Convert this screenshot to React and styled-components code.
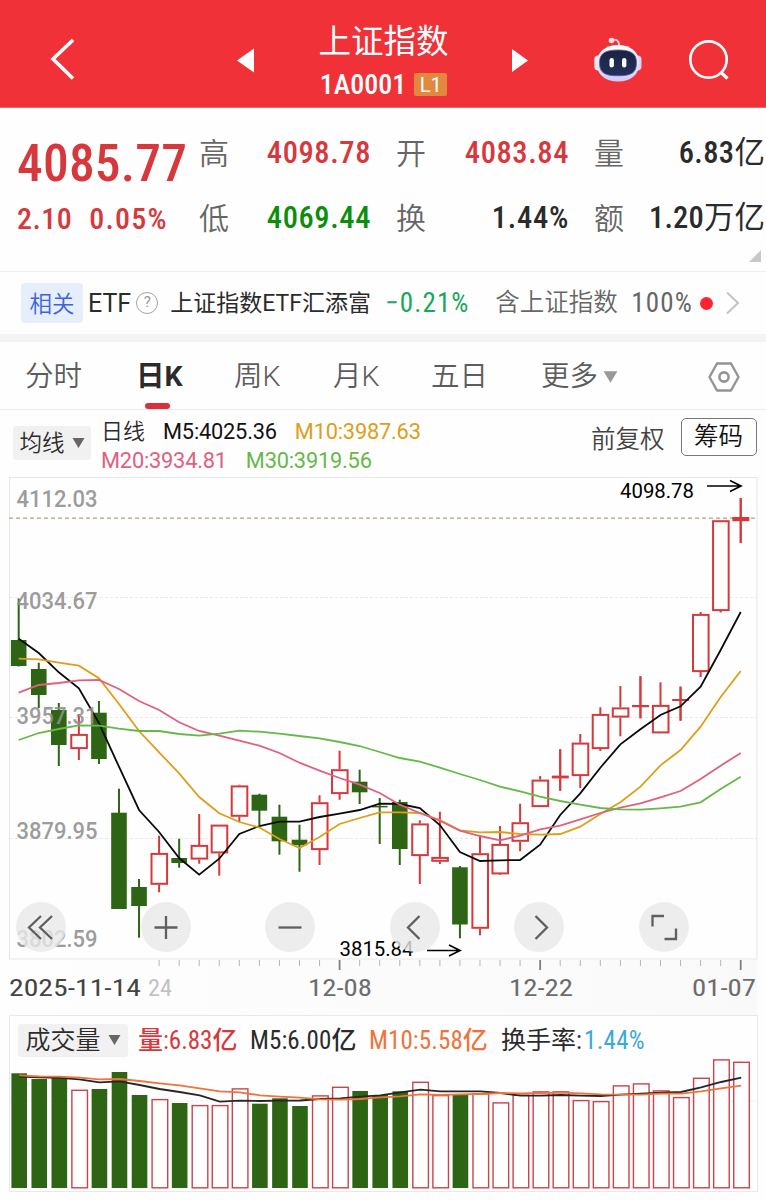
import React from 'react';
import styled, { createGlobalStyle } from 'styled-components';

const RED = '#d7383c';
const GREEN = '#2e6514';
const CJK = '"Noto Sans CJK SC", sans-serif';

const GlobalStyle = createGlobalStyle`
  * { box-sizing: border-box; }
  body {
    margin: 0;
    background: #fff;
    font-family: "Roboto Condensed", ${CJK};
    color: #222;
  }
`;

const Page = styled.div`
  width: 766px;
  height: 1200px;
  overflow: hidden;
  background: #fefefe;
`;

const Label = styled.span`
  display: block;
  width: ${p => (p.$width ? `${p.$width}px` : 'auto')};
  font-family: ${p => (p.$wide ? 'Roboto' : '"Roboto Condensed"')}, ${CJK};
  font-size: ${p => p.$size}px;
  font-weight: ${p => p.$weight || 400};
  line-height: 1;
  letter-spacing: ${p => p.$track || 0}px;
  color: ${p => p.$color || '#2b2b2b'};
  white-space: nowrap;
`;

const Unit = styled.span`
  font-weight: 400;
  letter-spacing: 0;
`;

/* header */

const Header = styled.header`
  height: 108px;
  display: grid;
  grid-template-columns: 225px 45px 227px 45px 1fr 116px;
  align-items: center;
  padding-top: 13px;
  background: #f03138;
  border-bottom: 1px solid #e8686b;
  color: #fff;
`;

const HeaderCell = styled.div`
  display: flex;
  padding-left: ${p => p.$left || 0}px;
`;

const Title = styled.div`
  display: flex;
  flex-direction: column;
  align-items: center;
  gap: 12px;
  margin-top: 5px;
`;

const Code = styled.div`
  display: flex;
  align-items: center;
  gap: 8px;
`;

const Level = styled.span`
  width: 33px;
  height: 23px;
  font-family: Roboto, sans-serif;
  font-size: 20px;
  line-height: 24px;
  text-align: center;
  background: #e2893f;
  border-radius: 2px;
`;

/* quote */

const Quote = styled.section`
  position: relative;
  height: 164px;
  display: flex;
  border-bottom: 1px solid #f1f1f1;
`;

const Price = styled.div`
  width: 199px;
  padding: 30px 0 0 17px;
`;

const Change = styled.div`
  display: flex;
  gap: 17px;
  margin-top: 14px;
`;

const Figures = styled.div`
  display: grid;
  grid-template-columns: 30px 142px 55px 143px 57px 139px;
  grid-template-rows: 65px 65px;
  align-items: center;
  padding-top: 13px;
  height: 143px;
`;

const Figure = styled(Label)`
  text-align: right;
`;

const FigureName = styled(Label)`
  padding-left: ${p => p.$left || 0}px;
`;

const Corner = styled.svg`
  position: absolute;
  right: 5px;
  bottom: 9px;
`;

/* related fund */

const Related = styled.section`
  height: 62px;
  display: flex;
  align-items: center;
  padding-left: 21px;
`;

const RelatedTag = styled.span`
  width: 62px;
  height: 40px;
  margin-right: 5px;
  border-radius: 4px;
  background: #e6edfb;
  color: #3a63e0;
  font: 350 22.5px/39px ${CJK};
  text-align: center;
`;

const Question = styled.span`
  width: 22px;
  height: 22px;
  margin: 0 12px 0 5px;
  border: 1.3px solid #a5a5a5;
  border-radius: 50%;
  color: #999;
  font: 15px/19px Roboto, sans-serif;
  text-align: center;
`;

const Dot = styled.span`
  width: 13px;
  height: 13px;
  margin: 0 13px 0 7px;
  border-radius: 50%;
  background: #ff2334;
`;

const Band = styled.div`
  height: 8px;
  background: #f4f4f4;
`;

/* tabs */

const Tabs = styled.nav`
  height: 68px;
  display: flex;
  border-bottom: 1px solid #ebebeb;
  padding-left: 25px;
`;

const Tab = styled.div`
  width: ${p => p.$width}px;
  display: flex;
  gap: 5px;
  align-items: center;
  font: ${p => (p.$active ? 700 : 350)} 28.5px/1 Roboto, ${CJK};
  color: ${p => (p.$active ? '#2b2b2b' : '#5c5c5c')};
  padding-top: 3px;
  position: relative;
`;

const Underline = styled.i`
  position: absolute;
  left: 9px;
  bottom: 0;
  width: 25px;
  height: 6px;
  border-radius: 3px;
  background: #dd2e3b;
`;

/* legend over the candles */

const Legend = styled.div`
  height: 67px;
  display: flex;
  align-items: flex-start;
  padding: 8px 8px 0 13px;
`;

const Picker = styled.div`
  width: ${p => p.$width}px;
  height: ${p => p.$height}px;
  margin-top: ${p => p.$top || 0}px;
  display: flex;
  align-items: center;
  justify-content: center;
  gap: 7px;
  border-radius: 3px;
  background: #f1f1f1;
`;

const Averages = styled.div`
  width: 500px;
  display: grid;
  gap: 6px;
  padding: 2px 0 0 10px;
`;

const AverageRow = styled.div`
  display: flex;
  align-items: center;
  gap: ${p => p.$gap}px;
  height: 23px;
`;

const Adjust = styled(Label)`
  padding-top: 10px;
`;

const ChipButton = styled.div`
  width: 76px;
  height: 38px;
  margin-left: 16px;
  border: 1px solid #777;
  border-radius: 5px;
  display: flex;
  align-items: center;
  justify-content: center;
`;

/* charts */

const ChartArea = styled.div`
  position: relative;
  height: 538px;
`;

const Drawing = styled.svg`
  display: block;
`;

const Controls = styled.div`
  position: absolute;
  top: 425px;
  left: 16px;
  display: flex;
  gap: 74.6px;
`;

const RoundButton = styled.button`
  width: 50px;
  height: 50px;
  padding: 0;
  border: 0;
  border-radius: 50%;
  background: rgba(233, 232, 232, 0.8);
`;

const VolumePanel = styled.section`
  width: 749px;
  margin-left: 9px;
  height: 177px;
  border: 1px solid #e8e8e8;
`;

const VolumeHead = styled.div`
  display: flex;
  align-items: center;
  height: 48px;
  padding-left: 8px;
`;

const VolumeStats = styled.div`
  display: grid;
  grid-template-columns: 112px 119px 132px 83px auto;
  padding-left: 10px;
`;

const candleX = i => 18.7 + i * 20.056;

// [rising, body top, body bottom, high, low]
const CANDLES = [
  [0, 640, 666, 598.5, 666.5], [0, 669, 695, 662.7, 708], [0, 710, 745, 703, 766],
  [1, 734, 749, 714, 760], [0, 712.7, 759, 701, 764], [0, 812.7, 909, 788.7, 909],
  [0, 887, 906, 879, 937.7], [1, 853, 884.7, 835.7, 892.3], [0, 858, 863, 838.7, 867.7],
  [1, 845, 859.5, 814, 863.7], [1, 824.7, 853.3, 824.7, 875.7], [1, 785.5, 816.7, 784.7, 822],
  [0, 794.7, 810.7, 793.7, 825], [0, 816.7, 841.3, 804.7, 854.7], [0, 839.7, 845.3, 824.7, 871.7],
  [1, 802.3, 850, 795.3, 865], [1, 769.3, 794, 750.7, 799.7], [0, 781.7, 792.3, 769.7, 804],
  [0, 805.9, 807.4, 798, 844], [0, 802, 849, 799.7, 865], [1, 823.5, 856, 820.3, 884],
  [1, 857, 861.7, 811.7, 864], [0, 867.3, 924.5, 866, 938.3], [1, 853.3, 928.7, 836.7, 935.3],
  [1, 844, 874.3, 826, 875], [1, 822.3, 841.7, 803.7, 851.3], [1, 779.7, 807, 776, 807],
  [1, 775.6, 778.4, 749.3, 790.7], [1, 742.7, 776, 734, 788], [1, 714, 749, 707.3, 751],
  [1, 707.5, 717.5, 686, 736.3], [1, 705, 707.2, 676.3, 718.3], [1, 705, 733.3, 682.3, 733],
  [1, 699, 701, 686.7, 720.7], [1, 614, 672, 612, 677], [1, 520.3, 611, 520.3, 612.5],
  [1, 517, 521.2, 498, 543],
];

const MA = [
  ['#0a0a0a', [638.7, 653, 672.3, 688.3, 723, 766.7, 810, 832, 858, 874.7, 858.7, 834, 826, 821.7, 821.7, 817, 813.7, 810, 803.7, 804, 808, 825, 852, 861, 860.3, 860, 844.7, 815, 793.3, 767.7, 744.3, 729.3, 715, 706.3, 686.7, 650, 612]],
  ['#dd9f18', [658.7, 659.3, 662.7, 665.7, 678.3, 704, 731, 752.3, 773.3, 797, 813.3, 822, 827.5, 839, 848, 837, 824, 818, 812.3, 812.3, 813, 820, 830.3, 832.3, 832, 834, 834.7, 834, 826.7, 814, 802.3, 786.7, 765.3, 750, 726.7, 697, 671]],
  ['#e0607f', [692.7, 685, 683, 680.3, 680, 689, 701, 710, 722.3, 731, 735.7, 740.7, 745.7, 753, 762.7, 770.7, 778, 784.7, 793, 804.7, 813, 820.7, 830.7, 836, 840.3, 835.7, 829.3, 825.7, 819.3, 813, 807.7, 803.3, 797.3, 791, 779, 765.7, 753]],
  ['#66b948', [740, 733, 729, 725.3, 725.7, 728.7, 731, 731, 734, 735.7, 733.7, 730.7, 731.7, 733.7, 736, 738.3, 742, 746, 752, 758, 761.7, 767.7, 774, 780, 786.7, 791.3, 796.7, 801, 804.7, 808, 809.3, 809.7, 808.3, 806.7, 802.3, 789, 776.7]],
];

const VOLUME_TOPS = [
  1073.3, 1079, 1077.5, 1089.7, 1089, 1072, 1095, 1099, 1103, 1105, 1105, 1088.3, 1103.7, 1098.3,
  1106, 1095.3, 1086.7, 1091, 1095, 1091.3, 1081.7, 1095, 1094.3, 1093.3, 1102.3, 1094.7, 1091.3,
  1091.3, 1100, 1101, 1085.3, 1083.3, 1090.3, 1097, 1077.7, 1059.3, 1061.7,
];

const VOLUME_MA = [
  ['#262626', [1076.7, 1077.3, 1077.8, 1079.3, 1082.3, 1081.3, 1085, 1089, 1092, 1095.3, 1101.7, 1100.7, 1101, 1100.7, 1100.5, 1099, 1098.3, 1096.7, 1095.3, 1092.3, 1089.7, 1091.3, 1091.3, 1091.3, 1093, 1095.7, 1095.7, 1095, 1095.7, 1096, 1094.7, 1093.7, 1092.7, 1092, 1087.3, 1082, 1077.7]],
  ['#f0733a', [1075.3, 1076.3, 1076.6, 1077.7, 1079.3, 1079, 1081, 1083.3, 1085.3, 1088.3, 1091.3, 1092.3, 1095.3, 1096.7, 1097.7, 1099.3, 1099.7, 1099, 1097.3, 1096.3, 1094.3, 1095, 1094.3, 1094, 1093, 1093.3, 1093, 1092.7, 1093.3, 1094.3, 1094.7, 1094.7, 1093.7, 1093.7, 1091.3, 1088.3, 1085.7]],
];

const SCALE = [
  ['4112.03', 506.5], ['4034.67', 609], ['3957.31', 724], ['3879.95', 838.5], ['3802.59', 947.3],
];

const GRID = [598, 718, 839];

const DATES = [
  ['2025-11-14', 9, 132, '#444'], ['24', 148, 24, '#c2c2c2'], ['12-08', 308, 64, '#6c6c6c'],
  ['12-22', 509, 64, '#6c6c6c'], ['01-07', 692, 64, '#6c6c6c'],
];

const points = ys => ys.map((y, i) => `${candleX(i)},${y}`).join(' ');

const Caret = ({ width = 13, height = 10, color = '#666' }) => (
  <svg width={width} height={height} viewBox="0 0 13 10">
    <path d="M0.5 0H12.5L6.5 10z" fill={color} />
  </svg>
);

const Candle = ({ x, rising, top, bottom, high, low }) => {
  if (!rising) {
    return (
      <g fill={GREEN}>
        <rect x={x - 1} y={high} width="2" height={low - high} />
        <rect x={x - 7.8} y={top} width="15.6" height={bottom - top} />
      </g>
    );
  }
  const flat = bottom - top < 4.6;
  return (
    <g fill={RED}>
      <rect x={x - 1} y={high} width="2" height={Math.max(top - high, 0)} />
      <rect x={x - 1} y={bottom} width="2" height={Math.max(low - bottom, 0)} />
      {flat ? (
        <>
          <rect x={x - 1} y={high} width="2" height={low - high} />
          <rect x={x - 8.4} y={top} width="17" height={bottom - top} />
        </>
      ) : (
        <rect x={x - 7.6} y={top + 0.9} width="15.6" height={bottom - top - 1.8} fill="#fefefe" stroke={RED} strokeWidth="2" />
      )}
    </g>
  );
};

const Arrow = ({ x, y, length }) => (
  <path
    d={`M${x} ${y}h${length}m-11 -5.5l11 5.5l-11 5.5`}
    fill="none"
    stroke="#000"
    strokeWidth="1.7"
  />
);

const CandleChart = () => (
  <Drawing width="766" height="538" viewBox="0 477 766 538" fontFamily="Roboto, sans-serif">
    <defs>
      <linearGradient id="fade">
        <stop offset="0" stopColor="#fefefe" />
        <stop offset="1" stopColor="#f9f9f9" />
      </linearGradient>
    </defs>
    <rect x="9" y="960" width="748" height="55" fill="url(#fade)" />
    <rect x="9.5" y="477.5" width="747.5" height="481.5" fill="#fefefe" stroke="#e6e6e6" />
    {GRID.map(y => (
      <line key={y} x1="10" x2="757" y1={y - 0.5} y2={y - 0.5} stroke="#e9e9e9" strokeDasharray="3 2" />
    ))}
    <line x1="9" x2="757" y1="518.2" y2="518.2" stroke="#b0a477" strokeWidth="1.2" strokeDasharray="4 3" />
    {CANDLES.map(([rising, top, bottom, high, low], i) => (
      <Candle key={i} x={candleX(i)} rising={rising} top={top} bottom={bottom} high={high} low={low} />
    ))}
    {MA.map(([color, ys]) => (
      <polyline key={color} points={points(ys)} fill="none" stroke={color} strokeWidth="1.8" />
    ))}
    <g fill="#8f8f8f" fillOpacity="0.9" fontSize="23" fontWeight="500">
      {SCALE.map(([text, y]) => (
        <text key={text} x="16.5" y={y} textLength="81" lengthAdjust="spacingAndGlyphs">{text}</text>
      ))}
    </g>
    <g fill="#000" fontSize="21">
      <text x="620" y="498" textLength="74" lengthAdjust="spacingAndGlyphs">4098.78</text>
      <text x="339.5" y="956" textLength="74" lengthAdjust="spacingAndGlyphs">3815.84</text>
    </g>
    <Arrow x={707} y={486} length={34} />
    <Arrow x={427} y={950.5} length={33} />
    {CANDLES.map((_, i) => i > 6 && (
      <rect
        key={i}
        x={candleX(i) - ((i - 6) % 10 ? 0.5 : 0.9)}
        y="960"
        width={(i - 6) % 10 ? 1 : 1.8}
        height={(i - 6) % 10 ? 6 : 10}
        fill={(i - 6) % 10 ? '#b5b5b5' : '#808080'}
      />
    ))}
    <g fontFamily="Roboto Condensed" fontSize="23.5">
      {DATES.map(([text, x, width, color]) => (
        <text key={text} x={x} y="996" fill={color} textLength={width} lengthAdjust="spacingAndGlyphs">{text}</text>
      ))}
    </g>
  </Drawing>
);

const VolumeChart = () => (
  <Drawing width="748" height="127" viewBox="9.5 1064 748 127" overflow="visible">
    <line x1="10" x2="757" y1="1101" y2="1101" stroke="#ececec" strokeDasharray="3 2" />
    {VOLUME_TOPS.map((top, i) => {
      const x = candleX(i);
      return CANDLES[i][0] ? (
        <rect key={i} x={x - 7.5} y={top + 0.6} width="15.6" height={1187.2 - top} fill="#fefefe" stroke="#c9434d" strokeWidth="1.4" />
      ) : (
        <rect key={i} x={x - 7.8} y={top} width="15.6" height={1188 - top} fill={GREEN} />
      );
    })}
    {VOLUME_MA.map(([color, ys]) => (
      <polyline key={color} points={points(ys)} fill="none" stroke={color} strokeWidth="1.8" />
    ))}
  </Drawing>
);

const Robot = () => (
  <svg width="50" height="46" viewBox="0 0 50 46">
    <defs>
      <linearGradient id="shell" x2="0" y2="1">
        <stop offset="0" stopColor="#fff" />
        <stop offset="0.6" stopColor="#e4e0fb" />
        <stop offset="1" stopColor="#cfc9fb" />
      </linearGradient>
      <linearGradient id="visor" x2="0" y2="1">
        <stop offset="0" stopColor="#1a2440" />
        <stop offset="1" stopColor="#22305c" />
      </linearGradient>
    </defs>
    <path d="M18.500 3C23 1.500 26.500 4 26 9" fill="none" stroke="#f7cdd5" strokeWidth="1.8" />
    <circle cx="18.500" cy="3.500" r="2.800" fill="#fbdde2" />
    <rect x="1.300" y="18.500" width="8" height="15" rx="4" fill="#f1e6f6" />
    <rect x="40.500" y="18.500" width="8" height="15" rx="4" fill="#e0d2f2" />
    <path d="M25 8C38 8 46.300 15.500 46.300 26C46.300 37.500 38 44.500 25 44.500S3.700 37.500 3.700 26C3.700 15.500 12 8 25 8z" fill="url(#shell)" />
    <path d="M25 13C38 13 43.500 16.500 43.500 25.500C43.500 36 38.500 38.800 25 38.800S6.500 36 6.500 25.500C6.500 16.500 12 13 25 13z" fill="url(#visor)" stroke="#5f5c9c" strokeWidth="0.8" />
    <rect x="16.500" y="21" width="4.400" height="9.500" rx="2.200" fill="#fff" />
    <rect x="29" y="21" width="4.400" height="9.500" rx="2.200" fill="#fff" />
  </svg>
);

const CONTROLS = [
  'M25 14L13 25.500L25 37M36 14L24 25.500L36 37',
  'M13.500 25.500h23M25 14v23',
  'M13.500 25.500h23',
  'M29.500 14L18 25.500L29.500 37',
  'M21.500 14L33 25.500L21.500 37',
  'M13.500 24.500V14h11.500M37 26.500V37h-11.500',
];

const App = () => (
  <>
    <GlobalStyle />
    <Page>
      <Header>
        <HeaderCell $left={49}>
          <svg width="28" height="44" viewBox="0 0 28 44">
            <path d="M24 2L4 21L24 40.500" fill="none" stroke="#fff" strokeWidth="3.600" />
          </svg>
        </HeaderCell>
        <HeaderCell $left={12}>
          <svg width="17" height="25" viewBox="0 0 17 25">
            <path d="M17 0.500V24.500L0 12.500z" fill="#fff" />
          </svg>
        </HeaderCell>
        <Title>
          <Label $size={32.5} $color="#fff">上证指数</Label>
          <Code>
            <Label $size={28} $weight={500} $color="#fff">1A0001</Label>
            <Level>L1</Level>
          </Code>
        </Title>
        <HeaderCell $left={15}>
          <svg width="17" height="25" viewBox="0 0 17 25">
            <path d="M0 1V24L16 12.500z" fill="#fff" />
          </svg>
        </HeaderCell>
        <HeaderCell $left={51}>
          <Robot />
        </HeaderCell>
        <HeaderCell $left={38}>
          <svg width="42" height="42" viewBox="0 0 42 42">
            <circle cx="20.500" cy="20.500" r="18.200" fill="none" stroke="#fff" strokeWidth="2.700" />
            <path d="M33 33.500L39.500 39.500" stroke="#fff" strokeWidth="3.200" />
          </svg>
        </HeaderCell>
      </Header>

      <Quote>
        <Price>
          <Label $size={51.5} $weight={500} $color={RED} $track={0.2}>4085.77</Label>
          <Change>
            <Label $size={30} $weight={500} $color={RED} $track={0.5}>2.10</Label>
            <Label $size={30} $weight={500} $color={RED} $track={1.2}>0.05%</Label>
          </Change>
        </Price>
        <Figures>
          <FigureName $size={30} $weight={350} $color="#666">高</FigureName>
          <Figure $size={30.5} $weight={500} $color={RED} $track={0.6}>4098.78</Figure>
          <FigureName $size={30} $weight={350} $color="#666" $left={25}>开</FigureName>
          <Figure $size={30.5} $weight={500} $color={RED} $track={0.6}>4083.84</Figure>
          <FigureName $size={30} $weight={350} $color="#666" $left={25}>量</FigureName>
          <Figure $size={30.5} $weight={500} $track={0.4}>6.83<Unit>亿</Unit></Figure>
          <FigureName $size={30} $weight={350} $color="#666">低</FigureName>
          <Figure $size={30.5} $weight={500} $color="#0b8f0b" $track={0.6}>4069.44</Figure>
          <FigureName $size={30} $weight={350} $color="#666" $left={25}>换</FigureName>
          <Figure $size={30.5} $weight={500} $track={0.7}>1.44%</Figure>
          <FigureName $size={30} $weight={350} $color="#666" $left={25}>额</FigureName>
          <Figure $size={30.5} $weight={500} $track={0.2}>1.20<Unit>万亿</Unit></Figure>
        </Figures>
        <Corner width="12" height="12" viewBox="0 0 12 12">
          <path d="M12 0V12H0z" fill="#c8c8c8" />
        </Corner>
      </Quote>

      <Related>
        <RelatedTag>相关</RelatedTag>
        <Label $size={25} $wide>ETF</Label>
        <Question>?</Question>
        <Label $size={23} $wide $width={215}>上证指数ETF汇添富</Label>
        <Label $size={27} $color="#18a85a" $track={1.1} $width={110}>−0.21%</Label>
        <Label $size={24.5} $weight={350} $color="#666" $width={136}>含上证指数</Label>
        <Label $size={27} $color="#666" $track={1.2}>100%</Label>
        <Dot />
        <svg width="13" height="24" viewBox="0 0 13 24">
          <path d="M1 1.500L12 12L1 22.500" fill="none" stroke="#c4c4c4" strokeWidth="2" />
        </svg>
      </Related>
      <Band />

      <Tabs>
        <Tab $width={111}>分时</Tab>
        <Tab $width={98} $active>日K<Underline /></Tab>
        <Tab $width={99}>周K</Tab>
        <Tab $width={98}>月K</Tab>
        <Tab $width={110}>五日</Tab>
        <Tab $width={167}>更多<Caret width={15} height={12} color="#999" /></Tab>
        <Tab $width={34}>
          <svg width="32" height="30" viewBox="0 0 32 30">
            <path d="M9 1.500H23L30.500 15L23 28.500H9L1.500 15z" fill="none" stroke="#949494" strokeWidth="2.400" strokeLinejoin="round" />
            <circle cx="16" cy="15" r="4.600" fill="none" stroke="#949494" strokeWidth="2.600" />
          </svg>
        </Tab>
      </Tabs>

      <Legend>
        <Picker $width={78} $height={34} $top={8}>
          <Label $size={22.5} $weight={350}>均线</Label>
          <Caret />
        </Picker>
        <Averages>
          <AverageRow $gap={18}>
            <Label $size={22} $weight={350}>日线</Label>
            <Label $size={21.8} $wide $weight={450} $color="#111" $track={-0.2}>M5:4025.36</Label>
            <Label $size={21.8} $wide $weight={450} $color="#dd9f18" $track={-0.2}>M10:3987.63</Label>
          </AverageRow>
          <AverageRow $gap={19}>
            <Label $size={21.8} $wide $weight={450} $color="#e0607f" $track={-0.2}>M20:3934.81</Label>
            <Label $size={21.8} $wide $weight={450} $color="#66b948" $track={-0.2}>M30:3919.56</Label>
          </AverageRow>
        </Averages>
        <Adjust $size={24.5} $weight={350} $color="#444">前复权</Adjust>
        <ChipButton>
          <Label $size={24.5} $weight={350} $color="#111">筹码</Label>
        </ChipButton>
      </Legend>

      <ChartArea>
        <CandleChart />
        <Controls>
          {CONTROLS.map(d => (
            <RoundButton key={d}>
              <svg width="50" height="50" viewBox="0 0 50 50">
                <path d={d} fill="none" stroke="#5f5f5f" strokeWidth="2.300" />
              </svg>
            </RoundButton>
          ))}
        </Controls>
      </ChartArea>

      <VolumePanel>
        <VolumeHead>
          <Picker $width={110} $height={33}>
            <Label $size={25} $weight={350}>成交量</Label>
            <Caret />
          </Picker>
          <VolumeStats>
            <Label $size={25} $weight={450} $color={RED}>量:6.83亿</Label>
            <Label $size={25} $weight={450} $track={0.1}>M5:6.00亿</Label>
            <Label $size={25} $weight={450} $color="#f0733a" $track={0.1}>M10:5.58亿</Label>
            <Label $size={25}>换手率:</Label>
            <Label $size={25} $weight={450} $color="#3ba7df" $track={0.3}>1.44%</Label>
          </VolumeStats>
        </VolumeHead>
        <VolumeChart />
      </VolumePanel>
    </Page>
  </>
);

export default App;
